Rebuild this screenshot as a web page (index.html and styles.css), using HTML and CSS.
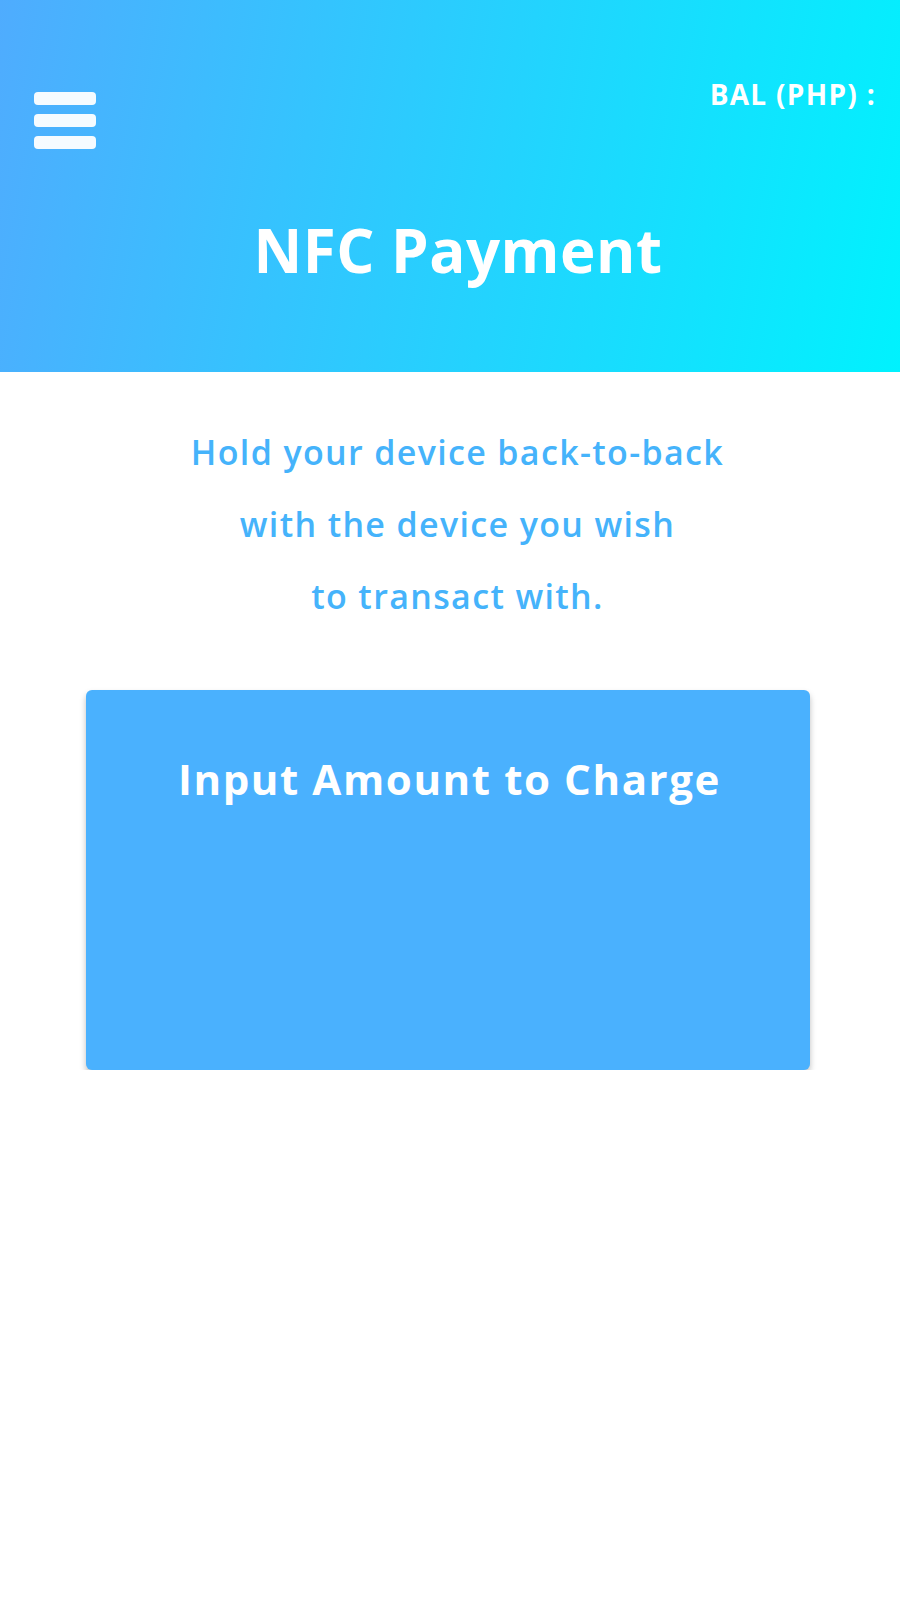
FILE: index.html
```html
<!DOCTYPE html>
<html lang="en">
<head>
<meta charset="utf-8">
<title>NFC Payment</title>
<link rel="stylesheet" href="styles.css">
</head>
<body>
  <header class="header">
    <div class="top-row">
      <button class="menu" aria-label="Menu">
        <span class="bar"></span>
        <span class="bar"></span>
        <span class="bar"></span>
      </button>
      <div class="balance">BAL (PHP) :</div>
    </div>
    <h1 class="title">NFC Payment</h1>
  </header>
  <main class="main">
    <p class="instructions">Hold your device back-to-back<br>with the device you wish<br>to transact with.</p>
    <section class="card">
      <h2 class="card-title">Input Amount to Charge</h2>
    </section>
  </main>
</body>
</html>
```

FILE: styles.css
```css
* { box-sizing: border-box; }

html, body {
  margin: 0;
  padding: 0;
  background: #ffffff;
  font-family: "Open Sans", "Noto Sans", sans-serif;
}

.header {
  height: 372px;
  background: linear-gradient(100deg, #4facfe 0%, #00f2fe 100%);
  padding: 80px 24px 0 34px;
  color: #ffffff;
}

.top-row {
  display: flex;
  justify-content: space-between;
  align-items: flex-start;
}

.menu {
  margin-top: 12px;
  padding: 0;
  border: 0;
  background: none;
  display: flex;
  flex-direction: column;
  gap: 9px;
  cursor: pointer;
}

.bar {
  display: block;
  width: 62px;
  height: 13px;
  border-radius: 4px;
  background: rgba(255, 255, 255, 0.95);
}

.balance {
  font-size: 28px;
  font-weight: 700;
  line-height: 1;
  letter-spacing: 1.3px;
}

.title {
  margin: 71px 0 0;
  padding-left: 6px;
  text-align: center;
  font-size: 60px;
  font-weight: 700;
  line-height: 1;
  letter-spacing: 0.5px;
}

.main {
  padding: 44px 0 0;
  display: flex;
  flex-direction: column;
  align-items: center;
}

.instructions {
  margin: 0;
  padding-left: 15px;
  text-align: center;
  font-size: 34px;
  font-weight: 600;
  line-height: 72px;
  letter-spacing: 1.35px;
  color: #45b3fb;
}

.card {
  margin-top: 58px;
  width: 724px;
  height: 380px;
  margin-left: -4px;
  background: #4ab1fe;
  border-radius: 6px;
  box-shadow: 0 4px 6px rgba(0, 0, 0, 0.26);
  padding-top: 68px;
}

.card-title {
  margin: 0;
  padding-left: 3px;
  text-align: center;
  color: #ffffff;
  font-size: 42px;
  font-weight: 700;
  line-height: 1;
  letter-spacing: 1.6px;
}
```
